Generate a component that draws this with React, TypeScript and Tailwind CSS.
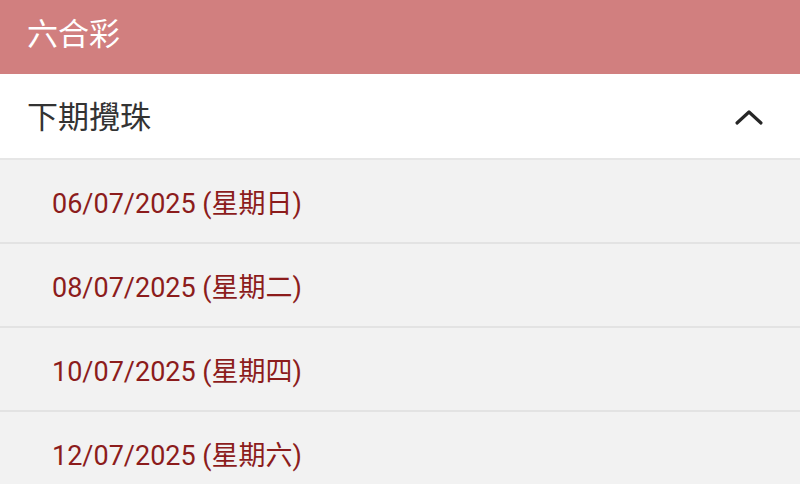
import React from 'react'

const draws = [
    '06/07/2025 (星期日)',
    '08/07/2025 (星期二)',
    '10/07/2025 (星期四)',
    '12/07/2025 (星期六)',
]

const ChevronUp = () => (
    <svg width="30" height="20" viewBox="0 0 30 20" fill="none">
        <path d="M3 16 L15 5 L27 16" stroke="#262626" strokeWidth="3.2" strokeLinecap="round" strokeLinejoin="round" />
    </svg>
)

const App = () => {
    return (
        <div
            className="w-[800px] h-[484px] overflow-hidden bg-[#f2f2f2]"
            style={{ fontFamily: 'Roboto, "Noto Sans CJK TC", sans-serif' }}
        >
            {/* Top bar */}
            <div className="h-[74px] bg-[#d17f7f] flex items-center px-[27px] pb-[6px]">
                <h1 className="text-[31px] text-white leading-none">六合彩</h1>
            </div>

            {/* Section header */}
            <div className="h-[86px] bg-white flex items-center justify-between pl-[27px] pr-[36px] pt-[2px] border-b-2 border-[#e6e6e6]">
                <h2 className="text-[31px] text-[#333333] leading-none">下期攪珠</h2>
                <ChevronUp />
            </div>

            {/* Draw dates */}
            <ul>
                {draws.map((d) => (
                    <li key={d} className="h-[84px] flex items-center pl-[52px] pt-[6px] border-b-2 border-[#e3e3e3]">
                        <span className="text-[27px] text-[#8c1c1c] leading-none">{d}</span>
                    </li>
                ))}
            </ul>
        </div>
    )
}

export default App
